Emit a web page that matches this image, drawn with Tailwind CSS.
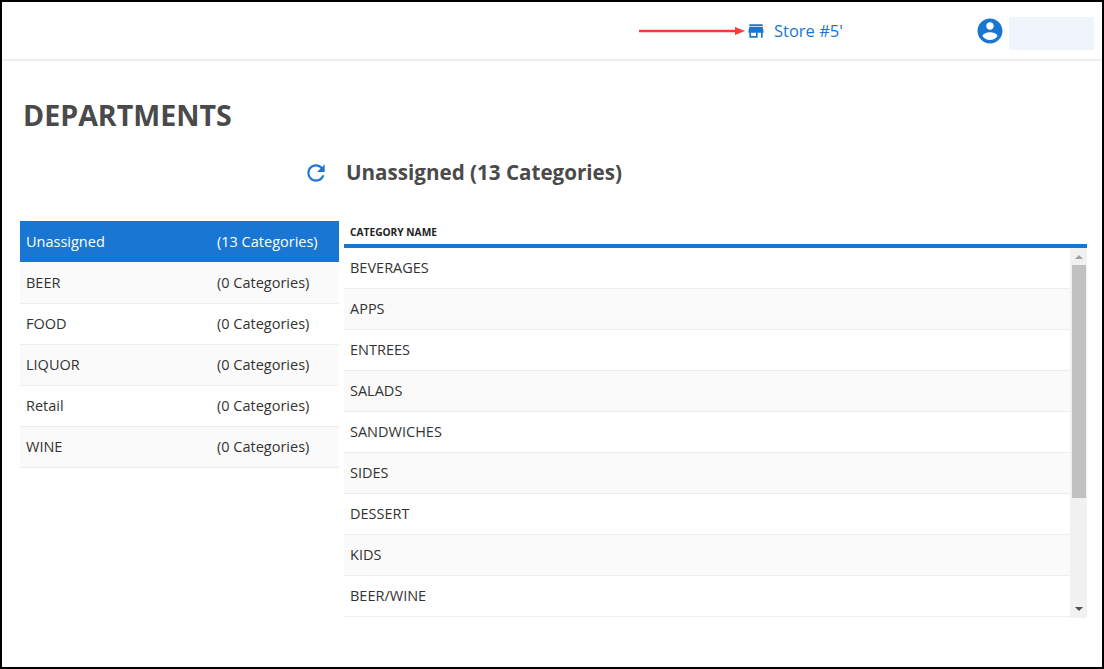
<!DOCTYPE html>
<html lang="en">
  <head>
    <meta charset="UTF-8" />
    <title>Departments</title>
    <script src="https://cdn.jsdelivr.net/npm/@tailwindcss/browser@4"></script>
  </head>
  <body class="bg-white font-['Open_Sans',sans-serif] text-[#333]">
    <div class="w-[1104px] h-[669px] border-2 border-black overflow-hidden">
      <!-- Top bar -->
      <header class="h-[59px] border-b-2 border-[#eeeeee] flex items-center text-[#1976d2]">
        <svg class="ml-[637px] w-[106px] h-3" viewBox="0 0 106 12">
          <path d="M0 6H98" stroke="#f43a3a" stroke-width="2.4" />
          <path d="M96 2L106 6L96 10Z" fill="#f43a3a" />
        </svg>
        <svg class="ml-[1px] w-[20px] h-[20px]" viewBox="0 0 24 24" fill="#1976d2">
          <path d="M20 4H4v2h16V4zm1 10v-2l-1-5H4l-1 5v2h1v6h10v-6h4v6h2v-6h1zm-9 4H6v-4h6v4z" />
        </svg>
        <span class="ml-[8px] mt-[2px] w-[70px] text-[16.5px] whitespace-nowrap">Store #5'</span>
        <svg class="ml-[131px] w-[30px] h-[30px]" viewBox="0 0 24 24" fill="#1976d2">
          <path d="M12 2C6.48 2 2 6.48 2 12s4.48 10 10 10 10-4.48 10-10S17.52 2 12 2zm0 3c1.66 0 3 1.34 3 3s-1.34 3-3 3-3-1.34-3-3 1.34-3 3-3zm0 14.2c-2.5 0-4.71-1.28-6-3.22.03-1.99 4-3.08 6-3.08 1.99 0 5.97 1.09 6 3.08-1.29 1.94-3.5 3.22-6 3.22z" />
        </svg>
        <div class="ml-[4px] mt-[6px] w-[85px] h-[33px] bg-[#f0f5fc]"></div>
      </header>

      <main>
        <h1 class="ml-[21px] mt-[32px] h-[44px] text-[28.6px] leading-[44px] font-bold text-[#4a4a4a]">DEPARTMENTS</h1>

        <div class="mt-[16px] flex items-center h-[40px]">
          <svg class="ml-[301px] w-[26px] h-[26px]" viewBox="0 0 24 24" fill="#1976d2">
            <path d="M17.65 6.35C16.2 4.9 14.21 4 12 4c-4.42 0-7.99 3.58-7.99 8s3.57 8 7.99 8c3.73 0 6.84-2.55 7.73-6h-2.08c-.82 2.33-3.04 4-5.65 4-3.31 0-6-2.69-6-6s2.69-6 6-6c1.66 0 3.14.69 4.22 1.78L13 11h7V4l-2.35 2.35z" />
          </svg>
          <h2 class="ml-[17px] mb-[2px] text-[20.6px] font-bold text-[#4a4a4a]">Unassigned (13 Categories)</h2>
        </div>

        <div class="mt-[28px] ml-[18px] flex gap-[5px] items-start">
          <!-- Department list -->
          <ul class="w-[319px] text-[14.5px]">
            <li class="h-[41px] flex items-center px-[6px] bg-[#1976d2] text-white"><span class="w-[191px]">Unassigned</span><span>(13 Categories)</span></li>
            <li class="h-[42px] flex items-center px-[6px] bg-[#fafafa] border-b border-[#eeeeee]"><span class="w-[191px]">BEER</span><span>(0 Categories)</span></li>
            <li class="h-[41px] flex items-center px-[6px] bg-white border-b border-[#eeeeee]"><span class="w-[191px]">FOOD</span><span>(0 Categories)</span></li>
            <li class="h-[41px] flex items-center px-[6px] bg-[#fafafa] border-b border-[#eeeeee]"><span class="w-[191px]">LIQUOR</span><span>(0 Categories)</span></li>
            <li class="h-[41px] flex items-center px-[6px] bg-white border-b border-[#eeeeee]"><span class="w-[191px]">Retail</span><span>(0 Categories)</span></li>
            <li class="h-[41px] flex items-center px-[6px] bg-[#fafafa] border-b border-[#eeeeee]"><span class="w-[191px]">WINE</span><span>(0 Categories)</span></li>
          </ul>

          <!-- Category table -->
          <section class="w-[743px]">
            <div class="h-[27px] flex items-center pl-[6px] border-b-[4px] border-[#1976d2] text-[10.2px] font-bold text-[#222]">CATEGORY NAME</div>
            <div class="flex">
              <ul class="w-[726px] text-[14.5px]">
                <li class="h-[41px] flex items-center px-[6px] bg-white border-b border-[#eeeeee]">BEVERAGES</li>
                <li class="h-[41px] flex items-center px-[6px] bg-[#fafafa] border-b border-[#eeeeee]">APPS</li>
                <li class="h-[41px] flex items-center px-[6px] bg-white border-b border-[#eeeeee]">ENTREES</li>
                <li class="h-[41px] flex items-center px-[6px] bg-[#fafafa] border-b border-[#eeeeee]">SALADS</li>
                <li class="h-[41px] flex items-center px-[6px] bg-white border-b border-[#eeeeee]">SANDWICHES</li>
                <li class="h-[41px] flex items-center px-[6px] bg-[#fafafa] border-b border-[#eeeeee]">SIDES</li>
                <li class="h-[41px] flex items-center px-[6px] bg-white border-b border-[#eeeeee]">DESSERT</li>
                <li class="h-[41px] flex items-center px-[6px] bg-[#fafafa] border-b border-[#eeeeee]">KIDS</li>
                <li class="h-[41px] flex items-center px-[6px] bg-white border-b border-[#eeeeee]">BEER/WINE</li>
              </ul>
              <!-- Scrollbar -->
              <div class="w-[17px] h-[370px] bg-[#f1f1f1] flex flex-col items-center">
                <svg class="mt-[7px] w-2 h-1" viewBox="0 0 8 4"><path d="M0 4L4 0L8 4Z" fill="#a0a0a0" /></svg>
                <div class="mt-[6px] w-[14px] h-[233px] bg-[#c1c1c1]"></div>
                <svg class="mt-[109px] w-2 h-1" viewBox="0 0 8 4"><path d="M0 0L4 4L8 0Z" fill="#505050" /></svg>
              </div>
            </div>
          </section>
        </div>
      </main>
    </div>
  </body>
</html>
